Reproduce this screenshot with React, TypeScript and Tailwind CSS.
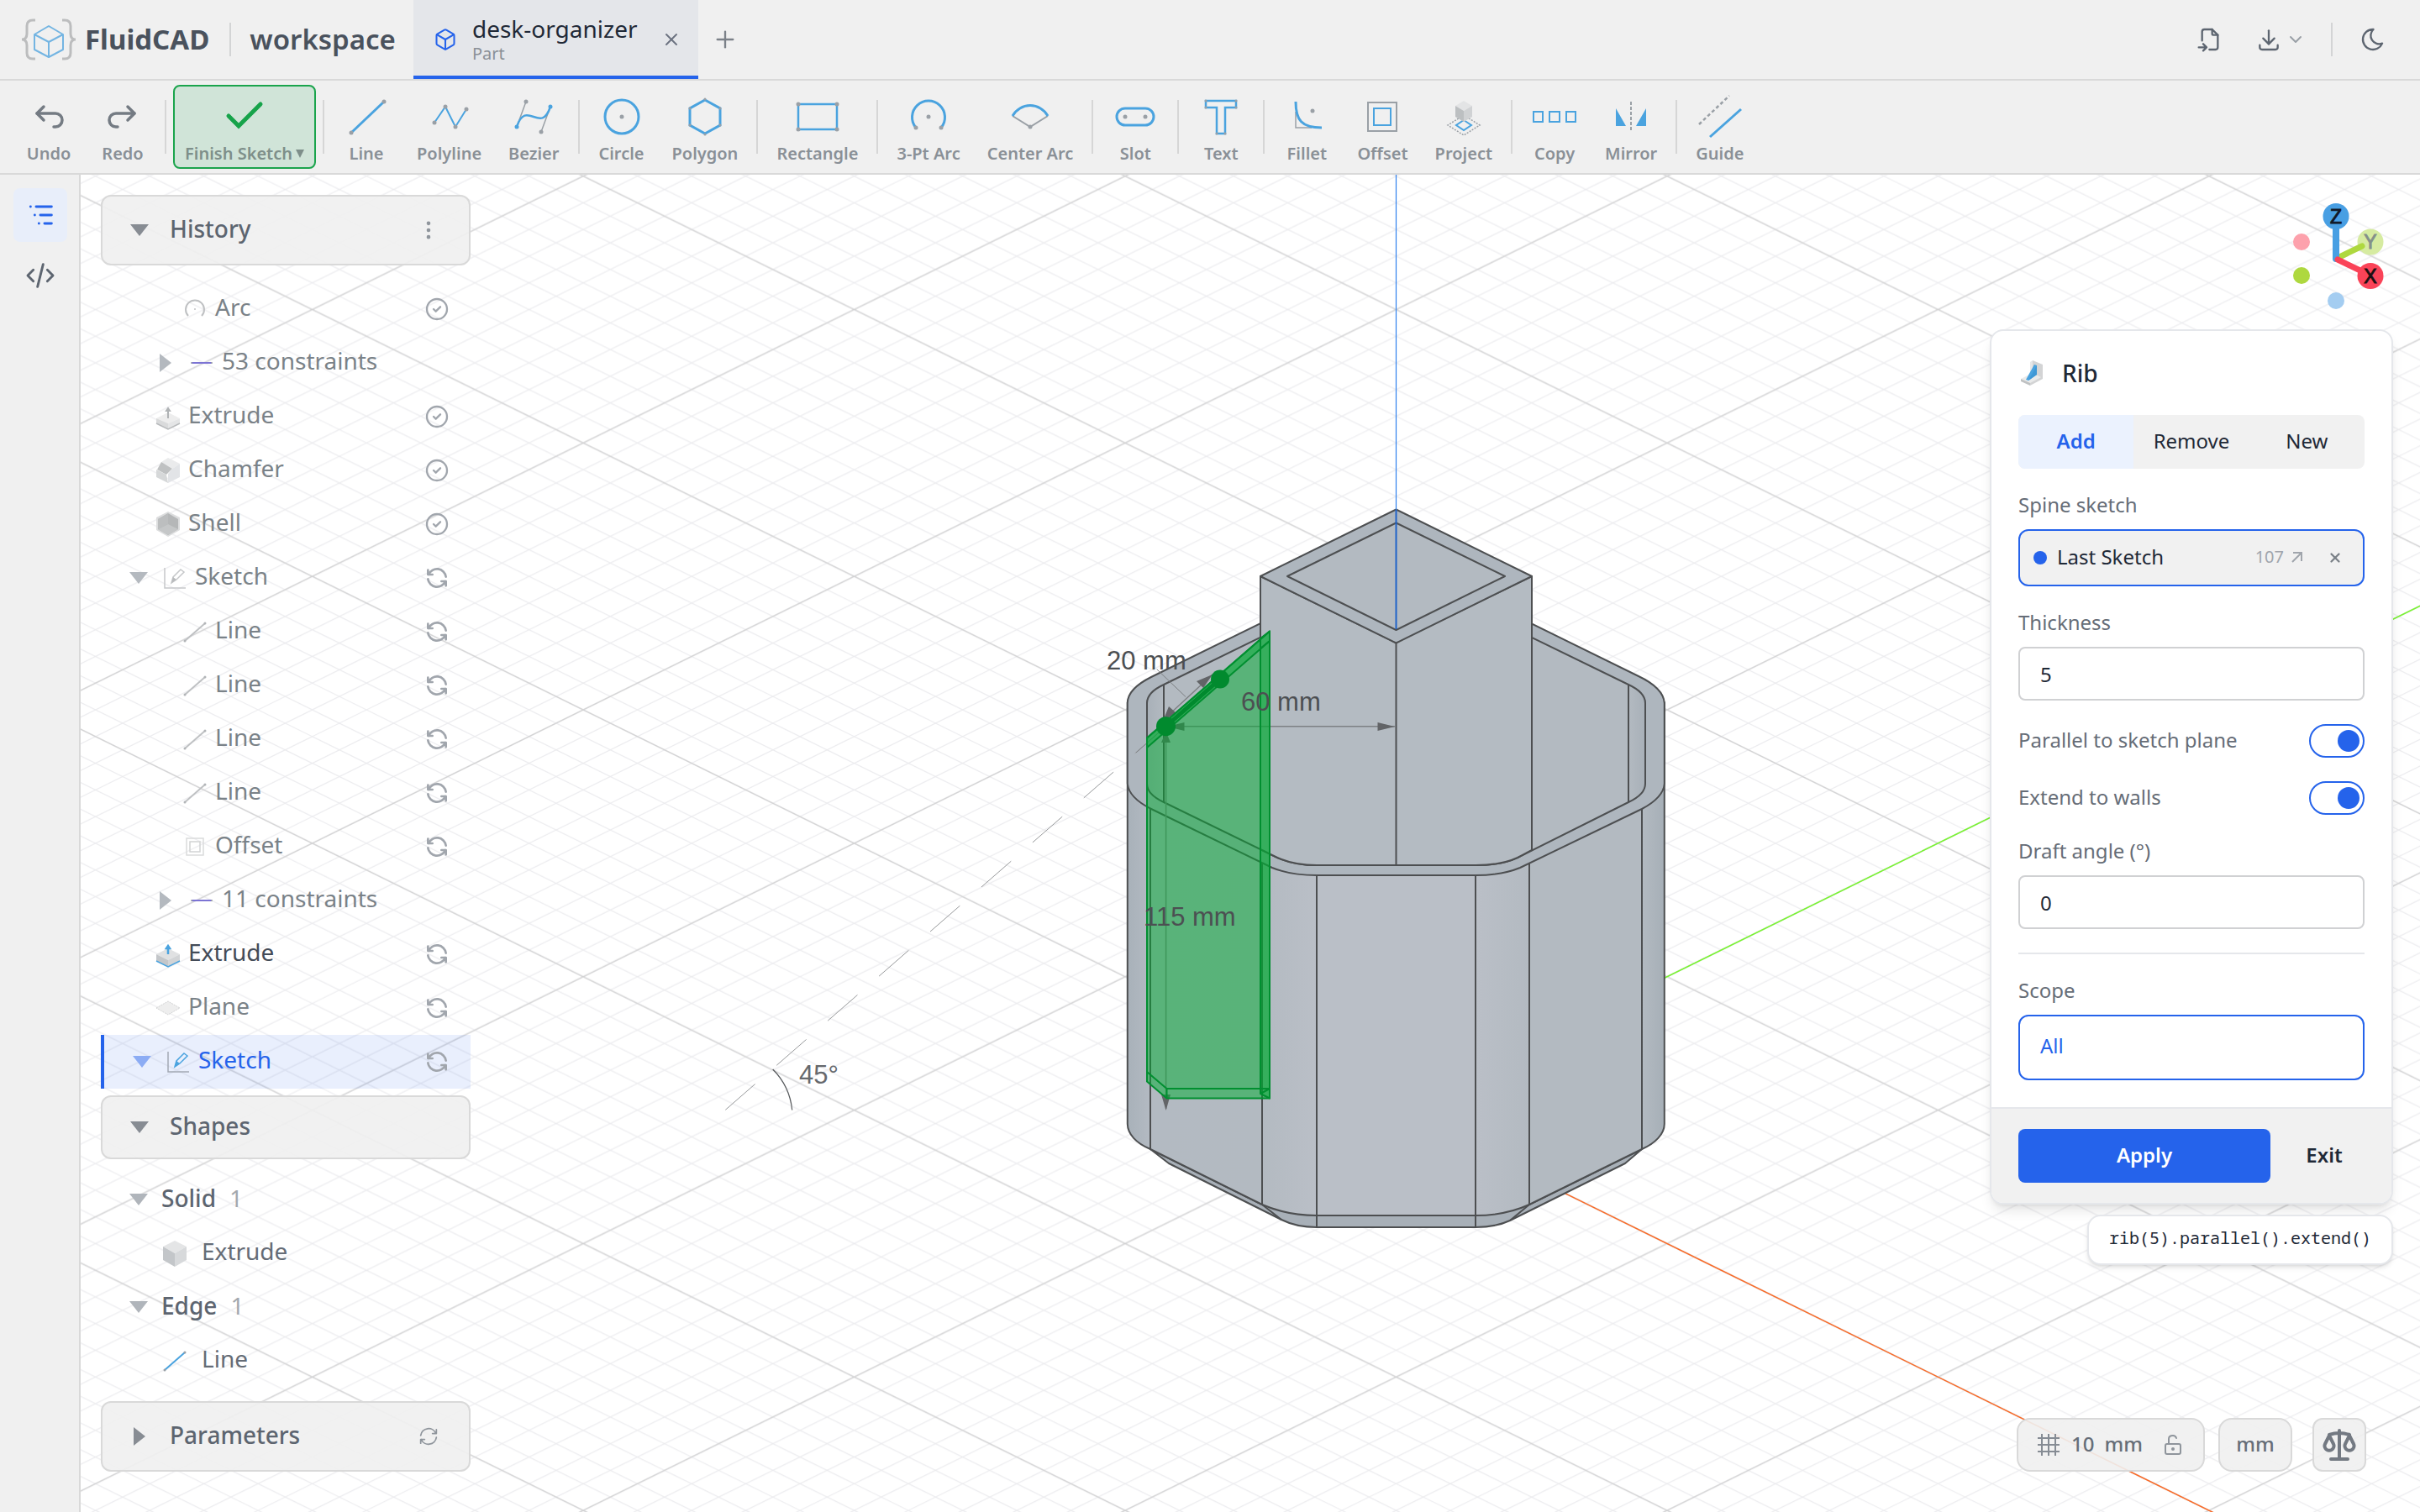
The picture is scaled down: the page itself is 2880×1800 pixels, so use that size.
import React from 'react';
import {
  TbArrowBackUp,
  TbArrowForwardUp,
  TbChevronDown,
  TbCircleCheck,
  TbCode,
  TbCube,
  TbDotsVertical,
  TbDownload,
  TbFileImport,
  TbListTree,
  TbMoon,
  TbPlus,
  TbRefresh,
  TbX,
} from 'react-icons/tb';

const BLUE = '#4aa3df';
const GRAY = '#9aa0a6';

interface ToolProps {
  label: string;
  icon: React.ReactNode;
}

const ToolSvg: React.FC<{ children: React.ReactNode }> = ({ children }) => (
  <svg viewBox="0 0 48 48" className="h-12 w-12 overflow-visible" fill="none" aria-hidden="true">
    {children}
  </svg>
);

const Dot: React.FC<{ x: number; y: number; color?: string }> = ({ x, y, color = GRAY }) => (
  <circle cx={x} cy={y} r="2.5" fill={color} />
);

const drawTools: ToolProps[][] = [
  [
    {
      label: 'Line',
      icon: (
        <ToolSvg>
          <path d="M6 43 45 6" stroke={BLUE} strokeWidth="3" />
          <Dot x={6} y={43} />
          <Dot x={45} y={6} />
        </ToolSvg>
      ),
    },
    {
      label: 'Polyline',
      icon: (
        <ToolSvg>
          <path d="M6 31 19 12 31 36 44 15" stroke={BLUE} strokeWidth="2" />
          <Dot x={6} y={31} />
          <Dot x={19} y={12} />
          <Dot x={31} y={36} />
          <Dot x={44} y={15} />
        </ToolSvg>
      ),
    },
    {
      label: 'Bezier',
      icon: (
        <ToolSvg>
          <path d="M4 36 15 6M44 12 33 42" stroke={GRAY} strokeWidth="1.5" />
          <path d="M4 36C15 2 33 46 44 12" stroke={BLUE} strokeWidth="2.5" />
          <Dot x={15} y={6} />
          <Dot x={33} y={42} />
          <Dot x={4} y={36} color={BLUE} />
          <Dot x={44} y={12} color={BLUE} />
        </ToolSvg>
      ),
    },
  ],
  [
    {
      label: 'Circle',
      icon: (
        <ToolSvg>
          <circle cx="24" cy="24" r="20" stroke={BLUE} strokeWidth="3" />
          <Dot x={24} y={24} />
        </ToolSvg>
      ),
    },
    {
      label: 'Polygon',
      icon: (
        <ToolSvg>
          <path d="M24 4 42 14V34L24 44 6 34V14Z" stroke={BLUE} strokeWidth="3" />
          {[[24, 3], [42, 14], [42, 34], [24, 45], [6, 34], [6, 14]].map(([x, y]) => (
            <circle key={`${x}-${y}`} cx={x} cy={y} r="1.5" fill={GRAY} />
          ))}
        </ToolSvg>
      ),
    },
  ],
  [
    {
      label: 'Rectangle',
      icon: (
        <ToolSvg>
          <rect x="1" y="9" width="46" height="30" stroke={BLUE} strokeWidth="2.5" />
          <Dot x={1} y={9} />
          <Dot x={47} y={9} />
          <Dot x={1} y={39} />
          <Dot x={47} y={39} />
        </ToolSvg>
      ),
    },
  ],
  [
    {
      label: '3-Pt Arc',
      icon: (
        <ToolSvg>
          <path d="M9 37A19.5 19.5 0 1 1 39 37" stroke={BLUE} strokeWidth="3" />
          <Dot x={9} y={37} />
          <Dot x={39} y={37} />
          <Dot x={24} y={24} />
        </ToolSvg>
      ),
    },
    {
      label: 'Center Arc',
      icon: (
        <ToolSvg>
          <path d="M3 23 24 36 45 23" stroke={GRAY} strokeWidth="2" />
          <path d="M3 23A24 24 0 0 1 45 23" stroke={BLUE} strokeWidth="3" />
          <Dot x={24} y={36} />
        </ToolSvg>
      ),
    },
  ],
  [
    {
      label: 'Slot',
      icon: (
        <ToolSvg>
          <rect x="2" y="14" width="44" height="20" rx="10" stroke={BLUE} strokeWidth="3" />
          <Dot x={12} y={24} />
          <Dot x={36} y={24} />
        </ToolSvg>
      ),
    },
  ],
  [
    {
      label: 'Text',
      icon: (
        <ToolSvg>
          <path d="M6 5H42V13H29V44H19V13H6Z" stroke={BLUE} strokeWidth="2.5" />
          {[[6, 5], [42, 5], [42, 13], [29, 44], [19, 44], [6, 13]].map(([x, y]) => (
            <circle key={`${x}-${y}`} cx={x} cy={y} r="1.5" fill={GRAY} />
          ))}
        </ToolSvg>
      ),
    },
  ],
  [
    {
      label: 'Fillet',
      icon: (
        <ToolSvg>
          <path d="M11 18V37H30" stroke={GRAY} strokeWidth="1.5" />
          <path d="M11 6C11 28 18 37 42 37" stroke={BLUE} strokeWidth="3" />
          <Dot x={31} y={17} />
        </ToolSvg>
      ),
    },
    {
      label: 'Offset',
      icon: (
        <ToolSvg>
          <rect x="7" y="7" width="34" height="34" stroke={GRAY} strokeWidth="2" />
          <rect x="14" y="14" width="20" height="20" stroke={BLUE} strokeWidth="2" />
        </ToolSvg>
      ),
    },
    {
      label: 'Project',
      icon: (
        <ToolSvg>
          <path d="M24 22 43 34 24 46 5 34Z" stroke={GRAY} strokeWidth="1.5" strokeDasharray="2 1.5" />
          <path d="M24 28 33 34 24 40 15 34Z" stroke={BLUE} strokeWidth="2" />
          <path d="M24 5 34 11 24 17 14 11Z" fill="#e3e4e5" />
          <path d="M14 11 24 17V30L14 24Z" fill="#bcbfc1" />
          <path d="M34 11 24 17V30L34 24Z" fill="#d0d2d4" />
        </ToolSvg>
      ),
    },
  ],
  [
    {
      label: 'Copy',
      icon: (
        <ToolSvg>
          <rect x="-1" y="18" width="11" height="12" stroke={BLUE} strokeWidth="2" />
          <rect x="18" y="18" width="12" height="12" stroke={BLUE} strokeWidth="2" />
          <rect x="38" y="18" width="11" height="12" stroke={BLUE} strokeWidth="2" />
        </ToolSvg>
      ),
    },
    {
      label: 'Mirror',
      icon: (
        <ToolSvg>
          <path d="M24 6V42" stroke={GRAY} strokeWidth="2" strokeDasharray="4 2" />
          <path d="M6 14V35H18ZM42 14V35H30Z" fill={BLUE} />
        </ToolSvg>
      ),
    },
  ],
  [
    {
      label: 'Guide',
      icon: (
        <ToolSvg>
          <path d="M-1 33 35-1" stroke={GRAY} strokeWidth="2.5" strokeDasharray="4 3" />
          <path d="M12 48 49 15" stroke={BLUE} strokeWidth="3" />
        </ToolSvg>
      ),
    },
  ],
];

const ToolButton: React.FC<ToolProps> = ({ label, icon }) => (
  <button className="flex h-[100px] min-w-[84px] flex-col items-center gap-[6px] rounded-lg px-[14px] pt-[14px] text-[#747b83]">
    {icon}
    <span className="text-[20px] leading-7 font-semibold whitespace-nowrap text-[#8a9097]">{label}</span>
  </button>
);

const ToolDivider: React.FC = () => <div className="mx-1 h-16 w-[2px] shrink-0 bg-[#d6d6d6]" />;

const Header: React.FC = () => (
  <header className="flex h-24 shrink-0 items-stretch border-b-2 border-[#d9d9d9]">
    <div className="flex items-center pl-6">
      <svg viewBox="0 0 68 52" className="h-[52px] w-[68px]" fill="none" aria-hidden="true">
        <path
          d="M18 3H15Q8 3 8 10V19Q8 26 2 26Q8 26 8 33V42Q8 49 15 49H18M50 3H53Q60 3 60 10V19Q60 26 66 26Q60 26 60 33V42Q60 49 53 49H50"
          stroke="#bcbdbe"
          strokeWidth="3"
        />
        <path
          d="M34 10 51 20V38L34 47 17 38V20ZM17 20 34 29 51 20M34 29V47"
          stroke="#74b5e2"
          strokeWidth="2"
          strokeLinejoin="round"
        />
      </svg>
      <span className="ml-[9px] text-[33px] font-bold text-[#4a525d]">FluidCAD</span>
      <div className="mr-[22px] ml-6 h-10 w-[2px] bg-[#d3d4d5]" />
      <span className="text-[33px] font-semibold text-[#4a525d]">workspace</span>
    </div>
    <div className="ml-[21px] flex items-center border-b-4 border-[#2563eb] bg-[#e4e6ea] pt-1 pr-5 pl-6">
      <TbCube className="h-7 w-7 text-[#2563eb]" strokeWidth={1.75} />
      <div className="ml-[18px] flex flex-col pt-[2px]">
        <span className="text-[28px] leading-8 text-[#1f2937]">desk-organizer</span>
        <span className="text-[20px] leading-7 text-[#8a9097]">Part</span>
      </div>
      <button aria-label="Close tab" className="ml-7 text-[#6b7280]">
        <TbX className="h-6 w-6" strokeWidth={2} />
      </button>
    </div>
    <button aria-label="New tab" className="ml-4 text-[#7b8188]">
      <TbPlus className="h-8 w-8" strokeWidth={1.75} />
    </button>
    <div className="ml-auto flex items-center pr-10 text-[#5d6570]">
      <button aria-label="Import file">
        <TbFileImport className="h-8 w-8" strokeWidth={1.75} />
      </button>
      <button aria-label="Export" className="ml-[38px] flex items-center gap-1">
        <TbDownload className="h-8 w-8" strokeWidth={1.75} />
        <TbChevronDown className="h-6 w-6 text-[#9aa0a7]" strokeWidth={2} />
      </button>
      <div className="mr-8 ml-[30px] h-10 w-[2px] bg-[#d3d4d5]" />
      <button aria-label="Toggle theme">
        <TbMoon className="h-8 w-8" strokeWidth={1.75} />
      </button>
    </div>
  </header>
);

const Toolbar: React.FC = () => (
  <nav className="flex h-28 shrink-0 items-center gap-1 border-b-2 border-[#d9d9d9] pl-4">
    <ToolButton label="Undo" icon={<TbArrowBackUp className="h-12 w-12" strokeWidth={1.75} />} />
    <ToolButton label="Redo" icon={<TbArrowForwardUp className="h-12 w-12" strokeWidth={1.75} />} />
    <ToolDivider />
    <button className="flex h-[100px] flex-col items-center gap-[6px] rounded-lg border-2 border-[#1aa44c] bg-[#d0e4d8] px-3 pt-3">
      <ToolSvg>
        <path d="M5 23 17 35 43 9" stroke="#16a34a" strokeWidth="5" strokeLinecap="round" />
      </ToolSvg>
      <span className="flex items-center gap-1 text-[20px] leading-7 font-semibold whitespace-nowrap text-[#7e8f8a]">
        Finish Sketch
        <svg viewBox="0 0 10 10" className="h-[10px] w-[10px]" aria-hidden="true">
          <path d="M0 0H10L5 10Z" fill="#7e8f8a" />
        </svg>
      </span>
    </button>
    {drawTools.map((group, i) => (
      <React.Fragment key={i}>
        <ToolDivider />
        {group.map((tool) => (
          <ToolButton key={tool.label} {...tool} />
        ))}
      </React.Fragment>
    ))}
  </nav>
);

const Rail: React.FC = () => (
  <div className="flex w-24 shrink-0 flex-col items-center gap-2 border-r-2 border-[#d9d9d9] bg-[#f0f0f0] pt-4 pl-[2px]">
    <button
      aria-label="Model tree"
      className="flex h-16 w-16 items-center justify-center rounded-lg bg-[#e8eefa] text-[#2563eb]"
    >
      <TbListTree className="h-10 w-10" strokeWidth={1.75} />
    </button>
    <button aria-label="Code" className="flex h-16 w-16 items-center justify-center text-[#5d6570]">
      <TbCode className="h-10 w-10" strokeWidth={1.75} />
    </button>
  </div>
);

const Caret: React.FC<{ open?: boolean; className?: string }> = ({ open, className = '' }) => (
  <svg viewBox="0 0 22 22" className={`h-[22px] w-[22px] shrink-0 ${className}`} aria-hidden="true">
    <path d={open ? 'M0 4H22L11 18Z' : 'M4 0V22L18 11Z'} fill="currentColor" />
  </svg>
);

type NodeIcon =
  | 'arc'
  | 'constraint'
  | 'extrude'
  | 'extrude-active'
  | 'chamfer'
  | 'shell'
  | 'sketch'
  | 'sketch-active'
  | 'line'
  | 'line-active'
  | 'offset'
  | 'plane'
  | 'solid';

const iconShapes: Record<NodeIcon, React.ReactNode> = {
  arc: (
    <>
      <path d="M6 22A11 11 0 1 1 22 22" stroke="#bfc1c3" strokeWidth="2" />
      <circle cx="14" cy="14" r="1" fill="#bfc1c3" />
    </>
  ),
  constraint: (
    <>
      <path d="M2 14H26" stroke="#7c74d4" strokeWidth="2" />
      <circle cx="2" cy="14" r="1" fill={GRAY} />
      <circle cx="26" cy="14" r="1" fill={GRAY} />
    </>
  ),
  extrude: (
    <>
      <path d="M0 16 14 9 28 16 14 22Z" fill="#ededed" />
      <path d="M0 16 14 22V29L0 22Z" fill="#d9dadb" />
      <path d="M28 16 14 22V29L28 22Z" fill="#e4e5e6" />
      <path d="M0 22 14 29 28 22" stroke="#b8babc" strokeWidth="1.5" />
      <path d="M14 16V6M12 7 14 4 16 7Z" stroke="#b0b3b5" strokeWidth="2" fill="#b0b3b5" />
    </>
  ),
  'extrude-active': (
    <>
      <path d="M0 14 14 7 28 14 14 21Z" fill="#e0e1e2" />
      <path d="M0 14 14 21V29L0 22Z" fill="#c3c6c9" />
      <path d="M28 14 14 21V29L28 22Z" fill="#d2d4d6" />
      <path d="M0 22 14 29 28 22" stroke={BLUE} strokeWidth="1.5" />
      <path d="M14 14V5M12 7 14 4 16 7Z" stroke={BLUE} strokeWidth="2.5" fill={BLUE} />
    </>
  ),
  chamfer: (
    <>
      <path d="M14-1 28 6 19 12 6 4Z" fill="#eaebec" />
      <path d="M6 4 19 12 12 19 1 13Z" fill="#bfc1c2" />
      <path d="M0 13 12 19 14 29 0 22Z" fill="#d6d8d9" />
      <path d="M28 6V22L14 29V18L19 12Z" fill="#e2e4e7" />
    </>
  ),
  shell: (
    <>
      <path d="M14-1 28 6V21L14 29 0 21V6Z" fill="#dcddde" />
      <path d="M14 1 26 8V20L14 27 2 20V8Z" fill="#b5b7b8" />
      <path d="M14 14 26 20 14 27 2 20Z" fill="#c5c7c8" />
      <path d="M14 1 2 8V20L14 14Z" fill="#bcbebf" />
    </>
  ),
  sketch: (
    <>
      <path d="M2 2V26H27" stroke="#c6c8ca" strokeWidth="1.5" />
      <path d="M10 20 12 13 21 4 25 7 16 16Z" stroke="#c6c8ca" strokeWidth="1.5" />
      <path d="M10 20 12 13 16 16Z" fill="#b9bbbd" />
    </>
  ),
  'sketch-active': (
    <>
      <path d="M2 2V26H27" stroke="#a3a9b4" strokeWidth="1.5" />
      <path d="M10 20 12 13 21 4 25 7 16 16Z" stroke={BLUE} strokeWidth="1.5" />
      <path d="M10 20 12 13 16 16Z" fill={BLUE} />
    </>
  ),
  line: (
    <>
      <path d="M2 25 26 4" stroke="#bfc1c3" strokeWidth="2" />
      <circle cx="2" cy="25" r="1.5" fill="#b2b5b8" />
      <circle cx="26" cy="4" r="1.5" fill="#b2b5b8" />
    </>
  ),
  'line-active': (
    <>
      <path d="M2 25 26 4" stroke={BLUE} strokeWidth="2" />
      <circle cx="2" cy="25" r="1.5" fill={GRAY} />
      <circle cx="26" cy="4" r="1.5" fill={GRAY} />
    </>
  ),
  offset: (
    <>
      <rect x="4" y="4" width="20" height="20" stroke="#dadbdc" strokeWidth="1.5" />
      <rect x="8" y="8" width="12" height="12" stroke="#d2d3d4" strokeWidth="1.5" />
    </>
  ),
  plane: <path d="M0 14 14 6 28 14 14 22Z" fill="#eeeeee" stroke="#d2d3d4" strokeDasharray="2 1" />,
  solid: (
    <>
      <path d="M14-1 28 6 14 14 0 6Z" fill="#e4e5e6" />
      <path d="M0 6 14 14V30L0 22Z" fill="#c3c6c9" />
      <path d="M28 6V22L14 30V14Z" fill="#d7d9db" />
    </>
  ),
};

const TreeIcon: React.FC<{ name: NodeIcon }> = ({ name }) => (
  <svg viewBox="0 0 28 28" className="h-7 w-7 shrink-0 overflow-visible" fill="none" aria-hidden="true">
    {iconShapes[name]}
  </svg>
);

interface HistoryItem {
  label: string;
  icon: NodeIcon;
  indent: string;
  caret?: 'open' | 'closed';
  status?: 'ok' | 'stale';
  state?: 'normal' | 'strong' | 'selected';
}

const lineItem: HistoryItem = { label: 'Line', icon: 'line', indent: 'pl-[98px]', status: 'stale' };

const historyItems: HistoryItem[] = [
  { label: 'Arc', icon: 'arc', indent: 'pl-[98px]', status: 'ok' },
  { label: '53 constraints', icon: 'constraint', indent: 'pl-[66px]', caret: 'closed' },
  { label: 'Extrude', icon: 'extrude', indent: 'pl-[66px]', status: 'ok' },
  { label: 'Chamfer', icon: 'chamfer', indent: 'pl-[66px]', status: 'ok' },
  { label: 'Shell', icon: 'shell', indent: 'pl-[66px]', status: 'ok' },
  { label: 'Sketch', icon: 'sketch', indent: 'pl-[34px]', caret: 'open', status: 'stale' },
  lineItem,
  lineItem,
  lineItem,
  lineItem,
  { label: 'Offset', icon: 'offset', indent: 'pl-[98px]', status: 'stale' },
  { label: '11 constraints', icon: 'constraint', indent: 'pl-[66px]', caret: 'closed' },
  { label: 'Extrude', icon: 'extrude-active', indent: 'pl-[66px]', status: 'stale', state: 'strong' },
  { label: 'Plane', icon: 'plane', indent: 'pl-[66px]', status: 'stale' },
  { label: 'Sketch', icon: 'sketch-active', indent: 'pl-[34px]', caret: 'open', status: 'stale', state: 'selected' },
];

const HistoryRow: React.FC<{ item: HistoryItem }> = ({ item }) => {
  const selected = item.state === 'selected';
  const color = selected ? 'text-[#2563eb]' : item.state === 'strong' ? 'text-[#434b57]' : 'text-[#7a8288]';
  return (
    <li
      className={`flex h-16 items-center pr-6 ${item.indent} ${
        selected ? 'border-l-4 border-[#2563eb] bg-[#2563eb]/10' : ''
      }`}
    >
      {item.caret && (
        <Caret
          open={item.caret === 'open'}
          className={`mr-[18px] ${selected ? 'text-[#8cacf4]' : 'text-[#b4b9bf]'}`}
        />
      )}
      <div className={`flex items-center gap-[10px] ${color}`}>
        <TreeIcon name={item.icon} />
        <span className="pb-[6px] text-[28px] leading-9">{item.label}</span>
      </div>
      {item.status === 'ok' && <TbCircleCheck className="ml-auto h-8 w-8 text-[#a1a6ad]" strokeWidth={1.75} />}
      {item.status === 'stale' && <TbRefresh className="ml-auto h-8 w-8 text-[#a1a6ad]" strokeWidth={2} />}
    </li>
  );
};

interface PanelHeaderProps {
  title: string;
  open?: boolean;
  height: string;
  action?: React.ReactNode;
}

const PanelHeader: React.FC<PanelHeaderProps> = ({ title, open, height, action }) => (
  <div
    className={`flex shrink-0 items-center rounded-xl border-2 border-[#d9d9d9] bg-[#f0f0f0]/90 pr-[34px] pl-[33px] ${height}`}
  >
    <button className="flex items-center gap-[25px] text-[#5d6570]">
      <Caret open={open} className="text-[#878c93]" />
      <span className="pb-1 text-[28px] leading-9 font-medium">{title}</span>
    </button>
    {action && <div className="ml-auto text-[#8f959c]">{action}</div>}
  </div>
);

const ShapeGroup: React.FC<{ title: string; count: number; icon: NodeIcon; item: string }> = ({
  title,
  count,
  icon,
  item,
}) => (
  <li>
    <div className="flex h-16 items-center pl-[34px] text-[28px] leading-9">
      <Caret open className="mr-4 text-[#b0b5bb]" />
      <span className="pb-1 font-medium text-[#5d6570]">{title}</span>
      <span className="ml-4 pb-1 text-[#a3a8ae]">{count}</span>
    </div>
    <div className="flex h-16 items-center gap-[18px] pl-[74px]">
      <TreeIcon name={icon} />
      <span className="pb-[6px] text-[28px] leading-9 text-[#656c76]">{item}</span>
    </div>
  </li>
);

const Sidebar: React.FC = () => (
  <aside className="mt-6 mb-12 ml-6 flex w-[440px] shrink-0 flex-col">
    <PanelHeader
      title="History"
      open
      height="h-[84px]"
      action={
        <button aria-label="History options" className="block">
          <TbDotsVertical className="h-7 w-7" strokeWidth={2} />
        </button>
      }
    />
    <ul className="mt-5 mb-2">
      {historyItems.map((item, i) => (
        <HistoryRow key={i} item={item} />
      ))}
    </ul>
    <PanelHeader title="Shapes" open height="h-[76px]" />
    <ul className="my-4">
      <ShapeGroup title="Solid" count={1} icon="solid" item="Extrude" />
      <ShapeGroup title="Edge" count={1} icon="line-active" item="Line" />
    </ul>
    <PanelHeader
      title="Parameters"
      height="h-[84px]"
      action={
        <button aria-label="Refresh parameters" className="block">
          <TbRefresh className="h-7 w-7 -scale-x-100" strokeWidth={1.5} />
        </button>
      }
    />
  </aside>
);

const Gizmo: React.FC = () => (
  <svg
    viewBox="2720 232 120 144"
    className="mt-6 mr-10 h-36 w-[120px]"
    fontFamily="'Liberation Sans', Arial, sans-serif"
    fontSize="23"
    textAnchor="middle"
  >
    <circle cx="2739" cy="288" r="10" fill="#fda1ac" />
    <circle cx="2780" cy="358" r="10" fill="#a4cdf1" />
    <circle cx="2821" cy="288" r="15.5" fill="#d6eba1" />
    <path d="M2780 308 2811 293" stroke="#aed83f" strokeWidth="7" strokeLinecap="round" />
    <path d="M2780 308V260" stroke="#489fe3" strokeWidth="8" strokeLinecap="round" />
    <path d="M2782 309 2815 325" stroke="#fa4358" strokeWidth="7" strokeLinecap="round" />
    <circle cx="2739" cy="328" r="10" fill="#aed83f" />
    <circle cx="2780" cy="257.5" r="15.5" fill="#489fe3" />
    <circle cx="2821" cy="328.5" r="15.5" fill="#fa4358" />
    <text x="2780" y="266" fill="#111827" stroke="#111827">Z</text>
    <text x="2821" y="296" fill="#84908a" stroke="#84908a">Y</text>
    <text x="2821" y="337" fill="#1c0f12" stroke="#1c0f12">X</text>
  </svg>
);

const Toggle: React.FC<{ id: string; label: string }> = ({ id, label }) => (
  <div className="mt-7 flex h-10 items-center justify-between">
    <label htmlFor={id} className="pb-[2px] text-[24px] leading-8 text-[#666d77]">
      {label}
    </label>
    <input
      id={id}
      type="checkbox"
      role="switch"
      defaultChecked
      className="flex h-10 w-[66px] appearance-none items-center justify-end rounded-full border-2 border-[#2563eb] bg-white pr-1 before:h-[26px] before:w-[26px] before:rounded-full before:bg-[#2563eb]"
    />
  </div>
);

const NumberField: React.FC<{ id: string; label: string; value: string }> = ({ id, label, value }) => (
  <div className="mt-7">
    <label htmlFor={id} className="block pb-[2px] text-[24px] leading-[30px] text-[#666d77]">
      {label}
    </label>
    <input
      id={id}
      defaultValue={value}
      className="mt-3 block h-16 w-full rounded-lg border-2 border-[#d0d1d3] bg-white px-6 text-[24px] text-[#1f2937]"
    />
  </div>
);

const RibPanel: React.FC = () => (
  <section className="mt-4 mr-8 w-[480px] overflow-hidden rounded-2xl border-2 border-[#e5e7eb] bg-white shadow-lg">
    <div className="px-8 pt-7 pb-8">
      <div className="flex h-11 items-center gap-5">
        <svg viewBox="0 0 32 32" className="h-8 w-8" aria-hidden="true">
          <path d="M17 1 29 6V23L17 17Z" fill="#d3d4d5" />
          <path d="M14 3 17 1V17L14 19Z" fill="#e6e7e8" />
          <path d="M3 23 17 16 29 22 14 30Z" fill="#e9eaea" />
          <path d="M3 23 14 28V31L3 26Z" fill="#bfc1c2" />
          <path d="M14 28 29 20V23L14 31Z" fill="#d3d4d5" />
          <path d="M19 6 22 7V18L12 25 9 24Z" fill="#4aa3df" />
          <path d="M22 7V18L12 25Z" fill="#3f98d6" />
        </svg>
        <h2 className="text-[28px] leading-9 font-medium text-[#1f2937]">Rib</h2>
      </div>
      <div className="mt-7 grid h-16 grid-cols-3 overflow-hidden rounded-lg bg-[#f1f1f1] text-[24px] text-[#1f2937]">
        <button className="bg-[#ebf2fe] pb-[2px] font-semibold text-[#2563eb]">Add</button>
        <button className="pb-[2px]">Remove</button>
        <button className="pb-[2px]">New</button>
      </div>
      <div className="mt-7 pb-[2px] text-[24px] leading-[30px] text-[#666d77]">Spine sketch</div>
      <div className="mt-3 flex h-[68px] items-center rounded-xl border-2 border-[#2563eb] bg-[#f1f1f1] px-4">
        <span className="h-4 w-4 rounded-full bg-[#2563eb]" />
        <span className="ml-3 pb-[2px] text-[24px] leading-8 text-[#1f2937]">Last Sketch</span>
        <a href="#line-107" className="ml-auto flex items-center gap-2 pb-[2px] text-[20px] text-[#a0a5ac]">
          107
          <svg viewBox="0 0 14 14" className="h-[14px] w-[14px]" fill="none" aria-hidden="true">
            <path d="M2 13 13 2M3 2H13V12" stroke="currentColor" strokeWidth="2" />
          </svg>
        </a>
        <button aria-label="Clear spine sketch" className="mr-2 ml-[30px] text-[#7b8188]">
          <TbX className="h-[18px] w-[18px]" strokeWidth={3} />
        </button>
      </div>
      <NumberField id="thickness" label="Thickness" value="5" />
      <Toggle id="parallel" label="Parallel to sketch plane" />
      <Toggle id="extend" label="Extend to walls" />
      <NumberField id="draft" label="Draft angle (°)" value="0" />
      <hr className="mt-7 border-t-2 border-[#e5e7eb]" />
      <div className="mt-7 pb-[2px] text-[24px] leading-[30px] text-[#666d77]">Scope</div>
      <button className="mt-3 block h-[78px] w-full rounded-xl border-2 border-[#2563eb] px-6 pb-1 text-left text-[24px] text-[#2563eb]">
        All
      </button>
    </div>
    <div className="flex items-center border-t-2 border-[#e5e7eb] bg-[#f1f1f1] px-8 py-6 text-[24px] font-semibold">
      <button className="h-16 grow rounded-lg bg-[#2563eb] pb-[2px] text-white">Apply</button>
      <button className="ml-4 h-16 w-24 pb-[2px] text-[#1f2937]">Exit</button>
    </div>
  </section>
);

const StatusBar: React.FC = () => (
  <div className="mt-auto mr-16 mb-12 flex h-16 text-[24px] font-medium text-[#666e78]">
    <div className="flex items-center rounded-2xl border-2 border-[#d9d9d9] bg-[#f0f0f0]/90 pr-6 pl-[22px]">
      <svg viewBox="0 0 28 28" className="h-7 w-7" aria-hidden="true">
        <path d="M6 1V27M14 1V27M22 1V27M1 6H27M1 14H27M1 22H27" stroke="#868c94" strokeWidth="2" />
      </svg>
      <span className="ml-[13px] pb-[2px]">10</span>
      <span className="ml-3 pb-[2px]">mm</span>
      <button aria-label="Unlock grid" className="ml-6">
        <svg viewBox="0 0 24 28" className="h-7 w-6" fill="none" aria-hidden="true">
          <rect x="3" y="13" width="18" height="12" rx="2" stroke="#8f959c" strokeWidth="2" />
          <path d="M7 13V7Q7 3 12 3Q15 3 16 6" stroke="#8f959c" strokeWidth="2" strokeLinecap="round" />
          <circle cx="12" cy="19" r="2" fill="#8f959c" />
        </svg>
      </button>
    </div>
    <button className="ml-4 w-[88px] rounded-2xl border-2 border-[#d9d9d9] bg-[#f0f0f0]/90 pb-[2px]">mm</button>
    <button
      aria-label="Measure"
      className="ml-6 flex w-16 items-center justify-center rounded-xl border-2 border-[#d9d9d9] bg-[#f0f0f0]/90"
    >
      <svg viewBox="0 0 40 40" className="h-10 w-10" fill="none" stroke="#737982" strokeLinecap="round" aria-hidden="true">
        <path
          d="M20 3V37M10 37H30M8 8Q20 4 32 8M8 9 3 19A5.5 5.5 0 1 0 13 19ZM32 9 27 19A5.5 5.5 0 1 0 37 19Z"
          strokeWidth="4"
          strokeLinejoin="round"
        />
      </svg>
    </button>
  </div>
);

const GRID_W = 644.94;
const GRID_H = 317.7;

const minorPath = Array.from({ length: 10 }, (_, i) => {
  const x = (GRID_W / 10) * i;
  const y = (GRID_H / 10) * i;
  return `M${x} 0L${GRID_W} ${GRID_H - y}M0 ${y}L${GRID_W - x} ${GRID_H}M${x} ${GRID_H}L${GRID_W} ${y}M0 ${
    GRID_H - y
  }L${GRID_W - x} 0`;
}).join('');

const Viewport: React.FC = () => (
  <svg
    viewBox="96 208 2784 1592"
    preserveAspectRatio="xMidYMid slice"
    className="absolute inset-0 h-full w-full bg-white"
    fill="none"
  >
    <defs>
      <pattern id="grid" x="1661.5" y="1321.6" width={GRID_W} height={GRID_H} patternUnits="userSpaceOnUse">
        <path d={minorPath} stroke="#ebebee" strokeWidth="1.2" />
        <path d={`M0 0L${GRID_W} ${GRID_H}M0 ${GRID_H}L${GRID_W} 0`} stroke="#d2d2d3" strokeWidth="1.5" />
      </pattern>
      <linearGradient id="shell" gradientUnits="userSpaceOnUse" x1="1341.8" y1="0" x2="1980.8" y2="0">
        <stop offset="0" stopColor="#a8b1b9" />
        <stop offset="0.042" stopColor="#b3bac2" />
        <stop offset="0.251" stopColor="#b3bac1" />
        <stop offset="0.352" stopColor="#babfc7" />
        <stop offset="0.648" stopColor="#babfc7" />
        <stop offset="0.749" stopColor="#b3bac1" />
        <stop offset="0.958" stopColor="#b3bac1" />
        <stop offset="1" stopColor="#a6afb7" />
      </linearGradient>
      <linearGradient id="inner" gradientUnits="userSpaceOnUse" x1="1365" y1="0" x2="1958" y2="0">
        <stop offset="0" stopColor="#a8b0b8" />
        <stop offset="0.034" stopColor="#b3bac1" />
        <stop offset="0.966" stopColor="#b3bac1" />
        <stop offset="1" stopColor="#a8b0b8" />
      </linearGradient>
    </defs>
    <rect x="-2000" y="-2000" width="7000" height="6000" fill="url(#grid)" />
    <path d="M1661.5 1321.6 3200 563.7" stroke="#78f52f" strokeWidth="1.5" />
    <path d="M1661.5 1321.6 3200 2079.5" stroke="#fb6a26" strokeWidth="1.5" />

    {/* body */}
    <g stroke="#4d4f51" strokeWidth="2" strokeLinejoin="round">
      <path
        d="M1369 1368 1391 1385 1525 1452Q1543 1461 1567 1461H1756Q1780 1461 1797 1453L1934 1385 1954 1368 1820 1434 1502 1434Z"
        fill="#a8b0b8"
      />
      <path
        d="M1341.8 836V1338C1342 1350 1352 1361 1369 1368L1502 1434C1525 1444 1545 1447 1567 1447H1756C1778 1447 1798 1444 1820 1434L1954 1368C1970 1361 1980.8 1350 1980.8 1338V836Z"
        fill="url(#shell)"
      />
      <path d="M1369 962V1368M1502 1026V1434M1567 1042V1461M1756 1042V1461M1820 1026V1434M1954 962V1368M1502 1434 1525 1452M1820 1434 1797 1453" />
      <path
        d="M1661 663 1370 806C1352 815 1341.8 825 1341.8 837V933C1343 945 1354 955 1370 963L1514 1033C1531 1040 1548 1042 1567 1042H1756C1775 1042 1792 1040 1809 1033L1954 963C1969 955 1980 945 1980.8 933V837C1980 825 1969 814 1950 805Z"
        fill="#aeb6be"
      />
      <path
        d="M1661 680 1385 815C1372 821 1365 828 1365 837V933C1365 942 1372 949 1385 955L1514 1018C1531 1027 1548 1030 1567 1030H1756C1775 1030 1791 1028 1806 1021L1938 955C1951 949 1958 942 1958 933V837C1958 828 1951 821 1938 815Z"
        fill="url(#inner)"
      />
      <path d="M1385 815V955M1938 815V955" />
    </g>

    {/* centre column */}
    <g stroke="#4d4f51" strokeWidth="2" strokeLinejoin="round">
      <path
        d="M1500 686V1011L1514 1018C1531 1027 1548 1030 1567 1030H1756C1775 1030 1791 1028 1806 1021L1823 1012V686L1661 765Z"
        fill="#b4bbc2"
      />
      <path d="M1661.5 765V1030" />
      <path d="M1661.5 606.5 1823 686 1661.5 765.5 1500 686Z" fill="#aeb6be" />
      <path d="M1661.5 622.5 1791 686 1661.5 750 1532 686Z" fill="#b3bac1" />
    </g>
    <path d="M1661.5 0V607" stroke="#2f80ed" strokeWidth="1.2" />
    <path d="M1661.5 607V749" stroke="#1f62c9" strokeWidth="2" />

    {/* dimensions */}
    <g stroke="#7d8083" strokeWidth="1.5">
      <path d="M863.3 1321.3 1387.6 864.7" stroke="#97999b" strokeWidth="1" strokeDasharray="46.8 34" />
      <path d="M919.7 1273A80 80 0 0 1 942.7 1321.5" stroke="#55585b" strokeWidth="1.2" />
      <path d="M1387.6 864.7H1661M1387.6 864.7V1320M1384.8 856.7 1442.8 803" />
      <path d="M1376.7 796.7 1411 829.5M1352 896 1387 865" strokeWidth="1" />
    </g>
    <g fill="#626467">
      <path d="M1660 865 1639.5 860V870ZM1389 865 1409.5 860V870ZM1387.6 871 1382 884H1393ZM1387.6 1322 1382 1303H1393Z" />
      <path d="M1384 858 1391 841 1400 849ZM1443 803 1424 811 1432 819Z" />
    </g>

    {/* rib preview */}
    <g stroke="#018f30" strokeWidth="2" strokeLinejoin="round">
      <path d="M1365 878.5 1511 751.5V1307.5H1388.5L1365 1287.5Z" fill="#00ab32" fillOpacity="0.5" />
      <path
        d="M1500 760 1511 751.5V1307.5L1500 1302ZM1365 878.5 1511 751.5V763L1365 890Z"
        fill="#00ab32"
        fillOpacity="0.4"
      />
      <path d="M1500 760V772L1511 763M1365 1276 1388.5 1296H1511L1500 1302M1388.5 1296V1307" />
      <path d="M1387.6 864.7 1452 808.5" strokeWidth="5" stroke="#018a2e" />
    </g>
    <circle cx="1452" cy="808.5" r="11" fill="#018a2e" />
    <circle cx="1387.5" cy="864.7" r="11.5" fill="#018a2e" />

    <g fill="#4c4f52" fontFamily="'Liberation Sans', Arial, sans-serif" fontSize="31">
      <text x="1317" y="797">20 mm</text>
      <text x="1477" y="846">60 mm</text>
      <text x="1361" y="1102">115 mm</text>
      <text x="951" y="1290" fill="#66696d">45°</text>
    </g>
  </svg>
);

const App: React.FC = () => {
  return (
    <div className="flex h-screen flex-col overflow-hidden bg-[#f0f0f0] font-['Noto_Sans',sans-serif]">
      <Header />
      <Toolbar />
      <div className="flex min-h-0 grow">
        <Rail />
        <main className="relative min-w-0 grow">
          <Viewport />
          <div className="relative flex h-full justify-between">
            <Sidebar />
            <div className="flex flex-col items-end">
              <Gizmo />
              <RibPanel />
              <code className="mt-3 mr-8 flex h-[60px] items-center rounded-2xl border-2 border-[#e5e7eb] bg-white px-6 pb-1 font-['Noto_Sans_Mono','DejaVu_Sans_Mono',monospace] text-[20px] text-[#1f2937] shadow-md">
                rib(5).parallel().extend()
              </code>
              <StatusBar />
            </div>
          </div>
        </main>
      </div>
    </div>
  );
};

export default App;
